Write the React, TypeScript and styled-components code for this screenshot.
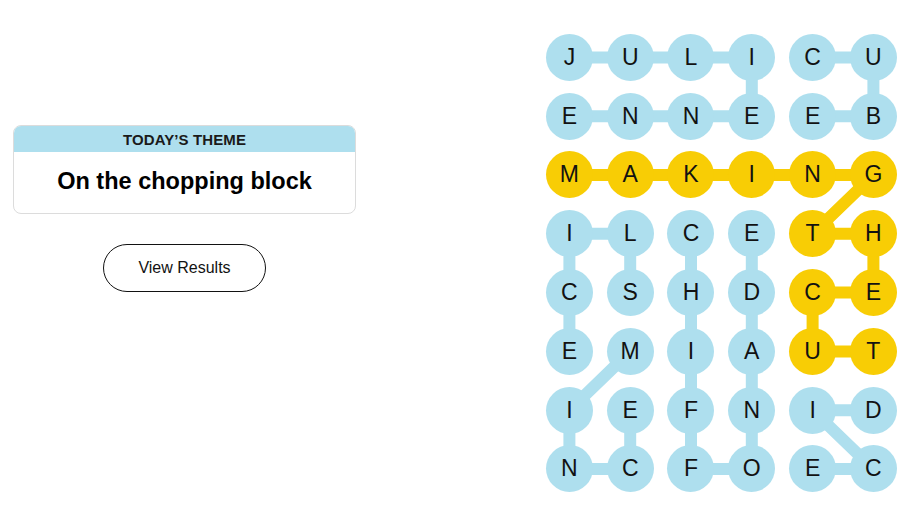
import React from "react";
import styled, { createGlobalStyle } from "styled-components";

const BLUE = "#aedfee";
const YELLOW = "#f8cd05";
const COL = 60.8;
const ROW = 58.8;

const GlobalStyle = createGlobalStyle`
  html, body {
    margin: 0;
    padding: 0;
    background: #ffffff;
  }
  body {
    font-family: "Liberation Sans", Arial, sans-serif;
    color: #121212;
  }
`;

const Page = styled.div`
  display: flex;
  align-items: flex-start;
  gap: 183px;
  padding-left: 13px;
  width: 910px;
  height: 512px;
  box-sizing: border-box;
  overflow: hidden;
`;

const Side = styled.div`
  width: 343px;
  margin-top: 125px;
  display: flex;
  flex-direction: column;
  align-items: center;
`;

const ThemeCard = styled.div`
  width: 100%;
  border: 1px solid #dcdcdc;
  border-radius: 8px;
  overflow: hidden;
  box-sizing: border-box;
`;

const ThemeHeader = styled.div`
  height: 26px;
  background: ${BLUE};
  display: flex;
  align-items: center;
  justify-content: center;
  font-size: 15px;
  font-weight: 700;
  letter-spacing: 0.1px;
  text-transform: uppercase;
  color: #1a1a1a;
`;

const ThemeBody = styled.div`
  height: 61px;
  display: flex;
  align-items: center;
  justify-content: center;
  font-size: 23.5px;
  font-weight: 700;
  color: #000000;
  padding-bottom: 2px;
  box-sizing: border-box;
`;

const ResultsButton = styled.button`
  margin-top: 30px;
  width: 163px;
  height: 48px;
  border: 1px solid #121212;
  border-radius: 24px;
  background: #ffffff;
  font-family: "Liberation Sans", Arial, sans-serif;
  font-size: 16px;
  color: #121212;
  cursor: pointer;
`;

const Board = styled.div`
  position: relative;
  margin-top: 28px;
  display: grid;
  grid-template-columns: repeat(6, ${COL}px);
  grid-template-rows: repeat(8, ${ROW}px);
`;

const Links = styled.svg`
  position: absolute;
  inset: 0;
  z-index: 0;
`;

const Cell = styled.div`
  position: relative;
  z-index: 1;
  display: flex;
  align-items: center;
  justify-content: center;
`;

const Letter = styled.div<{ $found: "theme" | "span" }>`
  width: 47px;
  height: 47px;
  border-radius: 50%;
  background: ${(p) => (p.$found === "span" ? YELLOW : BLUE)};
  display: flex;
  align-items: center;
  justify-content: center;
  font-size: 23px;
  color: #121212;
  line-height: 1;
`;

const letters = [
  "JULICU",
  "ENNEEB",
  "MAKING",
  "ILCETH",
  "CSHDCE",
  "EMIAUT",
  "IEFNID",
  "NCFOEC",
];

type Pt = [number, number];

const words: { path: Pt[]; span?: boolean }[] = [
  { path: [[0, 0], [0, 1], [0, 2], [0, 3], [1, 3], [1, 2], [1, 1], [1, 0]] },
  { path: [[0, 4], [0, 5], [1, 5], [1, 4]] },
  {
    path: [[2, 0], [2, 1], [2, 2], [2, 3], [2, 4], [2, 5], [3, 4], [3, 5], [4, 5], [4, 4], [5, 4], [5, 5]],
    span: true,
  },
  { path: [[4, 1], [3, 1], [3, 0], [4, 0], [5, 0]] },
  { path: [[5, 1], [6, 0], [7, 0], [7, 1], [6, 1]] },
  { path: [[3, 2], [4, 2], [5, 2], [6, 2], [7, 2], [7, 3], [6, 3], [5, 3], [4, 3], [3, 3]] },
  { path: [[6, 5], [6, 4], [7, 5], [7, 4]] },
];

const spanCells = new Set(
  words.filter((w) => w.span).flatMap((w) => w.path.map(([r, c]) => `${r}-${c}`))
);

const cx = (c: number) => c * COL + COL / 2;
const cy = (r: number) => r * ROW + ROW / 2;

export default function App() {
  return (
    <>
      <GlobalStyle />
      <Page>
        <Side>
          <ThemeCard>
            <ThemeHeader>Today’s Theme</ThemeHeader>
            <ThemeBody>On the chopping block</ThemeBody>
          </ThemeCard>
          <ResultsButton>View Results</ResultsButton>
        </Side>
        <Board>
          <Links width={COL * 6} height={ROW * 8}>
            {words.map((w, i) => (
              <polyline
                key={i}
                points={w.path.map(([r, c]) => `${cx(c)},${cy(r)}`).join(" ")}
                fill="none"
                stroke={w.span ? YELLOW : BLUE}
                strokeWidth={12}
                strokeLinejoin="round"
              />
            ))}
          </Links>
          {letters.flatMap((row, r) =>
            row.split("").map((ch, c) => (
              <Cell key={`${r}-${c}`}>
                <Letter $found={spanCells.has(`${r}-${c}`) ? "span" : "theme"}>{ch}</Letter>
              </Cell>
            ))
          )}
        </Board>
      </Page>
    </>
  );
}
